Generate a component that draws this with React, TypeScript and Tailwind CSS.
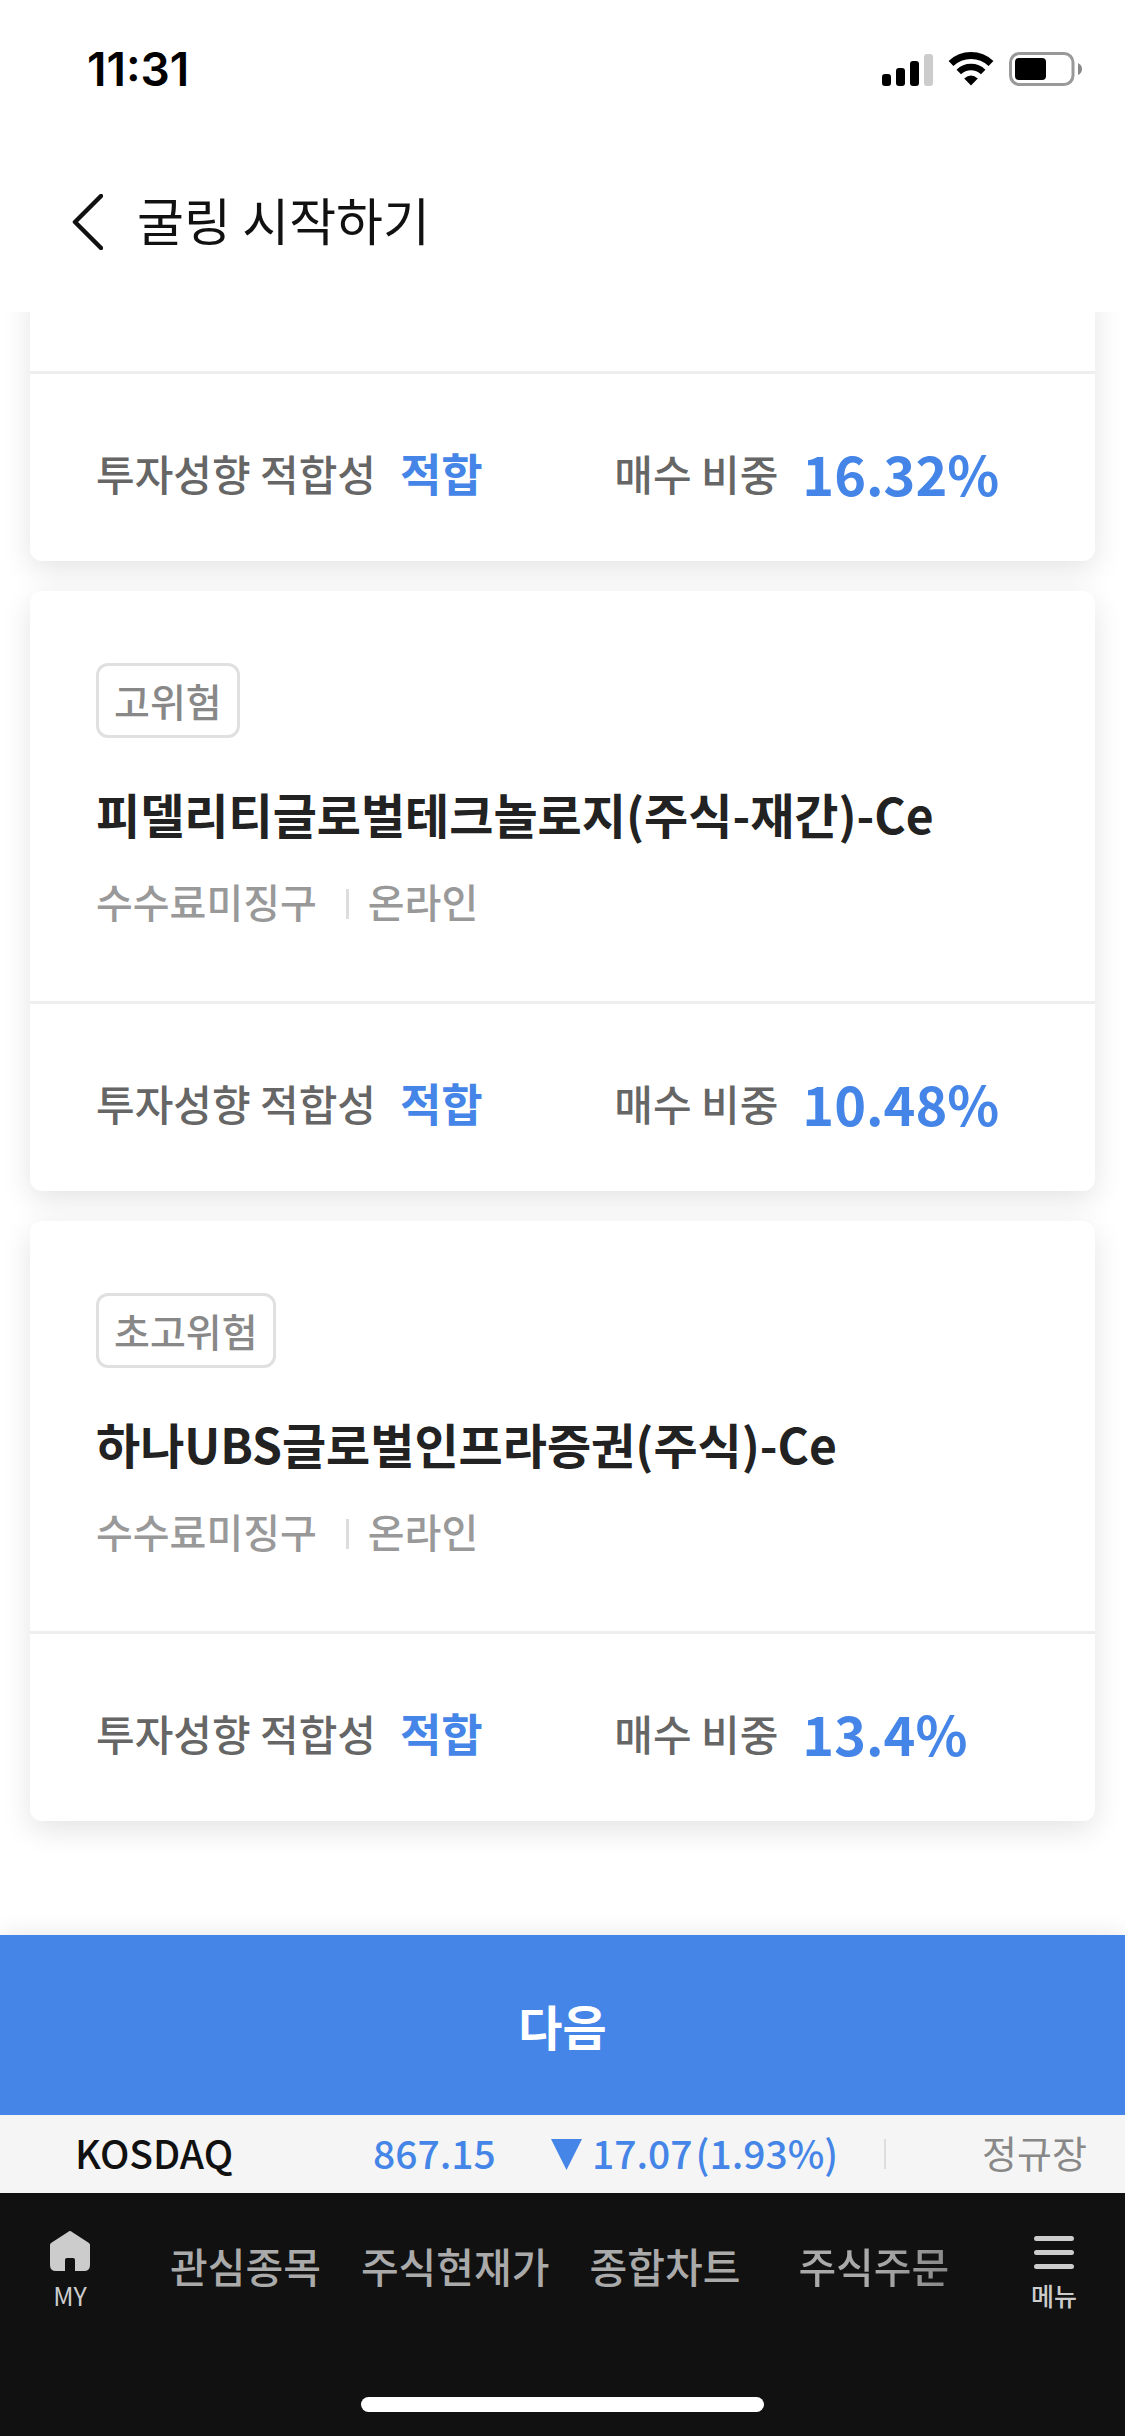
import { useState } from "react";

const funds = [
    { risk: "고위험", name: "피델리티글로벌테크놀로지(주식-재간)-Ce", fee: "수수료미징구", channel: "온라인", fit: "적합", ratio: "10.48%" },
    { risk: "초고위험", name: "하나UBS글로벌인프라증권(주식)-Ce", fee: "수수료미징구", channel: "온라인", fit: "적합", ratio: "13.4%" },
];

const tabs = ["관심종목", "주식현재가", "종합차트", "주식주문"];

const StatusBar = () => (
    <div className="flex h-[138px] items-center justify-between pl-[87px] pr-[43px]">
        <span className="font-['Inter',sans-serif] text-[46px] font-semibold leading-none text-black">11:31</span>
        <div className="flex items-center gap-[15px]">
            <svg width="51" height="33" viewBox="0 0 51 33" aria-hidden="true">
                <rect x="0" y="21" width="9" height="12" rx="3" fill="#000" />
                <rect x="14" y="15" width="9" height="18" rx="3" fill="#000" />
                <rect x="28" y="8" width="9" height="25" rx="3" fill="#000" />
                <rect x="42" y="1" width="9" height="32" rx="3" fill="#ccc" />
            </svg>
            <svg width="46" height="34" viewBox="0 0 46 34" aria-hidden="true">
                <path d="M3 11.5 A29 29 0 0 1 43 11.5" fill="none" stroke="#000" strokeWidth="7" />
                <path d="M10.8 20 A17.5 17.5 0 0 1 35.2 20" fill="none" stroke="#000" strokeWidth="6.5" />
                <path d="M16.2 26.5 Q23 20.5 29.8 26.5 L23 33.5 Z" fill="#000" />
            </svg>
            <svg width="73" height="34" viewBox="0 0 73 34" aria-hidden="true">
                <rect x="1.5" y="1.5" width="62.5" height="31" rx="9" fill="none" stroke="#999" strokeWidth="3" />
                <rect x="6" y="6" width="31" height="22" rx="4" fill="#000" />
                <path d="M69 11 Q73 13 73 17 Q73 21 69 23 Z" fill="#888" />
            </svg>
        </div>
    </div>
);

const FundSummary = ({ fit, ratio }: { fit: string; ratio: string }) => (
    <div className="grid grid-cols-[5fr_4fr] border-t-3 border-[#eee] px-[66px] pb-[52px] pt-[63px]">
        <p className="flex items-center gap-[24px] leading-[72px] text-[#666]">
            <span className="text-[42px] font-medium">투자성향 적합성</span>
            <strong className="text-[45px] font-bold text-[#4485e7]">{fit}</strong>
        </p>
        <p className="flex items-center gap-[24px] leading-[72px] text-[#666]">
            <span className="text-[42px] font-medium">매수 비중</span>
            <strong className="text-[54px] font-bold text-[#4485e7]">{ratio}</strong>
        </p>
    </div>
);

const App = () => {
    const [activeTab, setActiveTab] = useState("");

    return (
        <div className="flex min-h-screen flex-col bg-white font-['Noto_Sans_CJK_KR',sans-serif]">
            <StatusBar />
            <header className="flex h-[174px] items-center gap-[34px] pb-[6px] pl-[72px]">
                <button type="button" aria-label="뒤로">
                    <svg width="31" height="56" viewBox="0 0 31 56" aria-hidden="true">
                        <path d="M29 2 L3 28 L29 54" fill="none" stroke="#111" strokeWidth="4.5" strokeLinecap="round" strokeLinejoin="round" />
                    </svg>
                </button>
                <h1 className="pb-[6px] text-[51px] font-normal leading-none text-[#111]">굴링 시작하기</h1>
            </header>

            <main className="flex flex-1 flex-col gap-[30px] overflow-hidden px-[30px] pb-[114px]">
                <section className="-mt-[30px] rounded-[12px] bg-white pt-[89px] shadow-[0_9px_30px_rgba(0,0,0,0.11)]">
                    <FundSummary fit="적합" ratio="16.32%" />
                </section>
                {funds.map((fund) => (
                    <section key={fund.name} className="rounded-[12px] bg-white shadow-[0_9px_30px_rgba(0,0,0,0.11)]">
                        <div className="flex flex-col items-start px-[66px] pb-[70px] pt-[72px]">
                            <span className="rounded-[12px] border-3 border-[#e0e0e0] px-[15px] text-[39px] font-medium leading-[69px] text-[#888]">{fund.risk}</span>
                            <h2 className="mt-[39px] text-[48px] font-bold leading-[72px] text-[#222]">{fund.name}</h2>
                            <p className="mt-[22px] flex items-center text-[40px] font-medium leading-[60px] text-[#999]">
                                <span>{fund.fee}</span>
                                <span className="ml-[29px] mr-[19px] mt-[6px] h-[30px] w-[3px] bg-[#ddd]" />
                                <span>{fund.channel}</span>
                            </p>
                        </div>
                        <FundSummary fit={fund.fit} ratio={fund.ratio} />
                    </section>
                ))}
            </main>

            <button type="button" className="h-[180px] bg-[#4485e7] text-[48px] font-bold leading-none text-white shadow-[0_0_24px_rgba(0,0,0,0.1)]">
                다음
            </button>

            <div className="relative flex h-[78px] items-center bg-[#f5f5f5] pl-[75px] pr-[38px] text-[39px] font-medium text-[#4485e7]">
                <span className="w-[298px] pb-[4px] leading-none text-[#111]">KOSDAQ</span>
                <span className="w-[178px] pb-[4px] leading-none">867.15</span>
                <svg width="31" height="31" viewBox="0 0 31 31" aria-hidden="true">
                    <path d="M0 0 H31 L15.5 31 Z" fill="#4485e7" />
                </svg>
                <span className="ml-[10px] flex gap-[3px] pb-[4px] leading-none">
                    <span>17.07</span>
                    <span>(1.93%)</span>
                </span>
                <span className="ml-[46px] h-[30px] w-[2px] bg-[#ddd]" />
                <span className="ml-auto pb-[4px] text-[38px] font-normal leading-none text-[#888]">정규장</span>
            </div>

            <footer className="relative bg-[#111] pb-[24px] pt-[36px]">
                <nav className="flex h-[168px] items-start justify-between pl-[49px] pr-[48px]">
                    <a href="#my" className="flex flex-col items-center gap-[9px] text-[25px] leading-[30px] text-[#ccc]">
                        <svg width="42" height="42" viewBox="0 0 42 42" aria-hidden="true">
                            <path d="M19 3 Q21 1 23 3 L40 14 Q41 15 41 16 V36 Q41 42 35 42 H26 V31 Q26 29 24 29 H18 Q16 29 16 31 V42 H7 Q1 42 1 36 V16 Q1 15 2 14 Z" fill="#ccc" />
                        </svg>
                        MY
                    </a>
                    <div className="ml-[79px] flex flex-1 items-center gap-[40px]">
                        {tabs.map((tab, index) => (
                            <button
                                key={tab}
                                type="button"
                                onClick={() => setActiveTab(tab)}
                                className={`text-[41px] font-medium leading-[72px] ${index === 3 ? "ml-[18px] bg-linear-to-r from-[#aaa] from-50% to-[#888] bg-clip-text text-transparent" : activeTab === tab ? "text-white" : "text-[#aaa]"}`}
                            >
                                {tab}
                            </button>
                        ))}
                    </div>
                    <button type="button" className="flex flex-col items-center gap-[9px] text-[25px] font-medium leading-[30px] text-[#ccc]">
                        <svg width="42" height="42" viewBox="0 0 42 42" aria-hidden="true">
                            <path d="M3.5 9.5 H38.5 M3.5 23.5 H38.5 M3.5 37.5 H38.5" stroke="#ccc" strokeWidth="5" strokeLinecap="round" />
                        </svg>
                        메뉴
                    </button>
                </nav>
                <div className="mx-auto h-[15px] w-[403px] rounded-full bg-white" />
            </footer>
        </div>
    );
};

export default App;
